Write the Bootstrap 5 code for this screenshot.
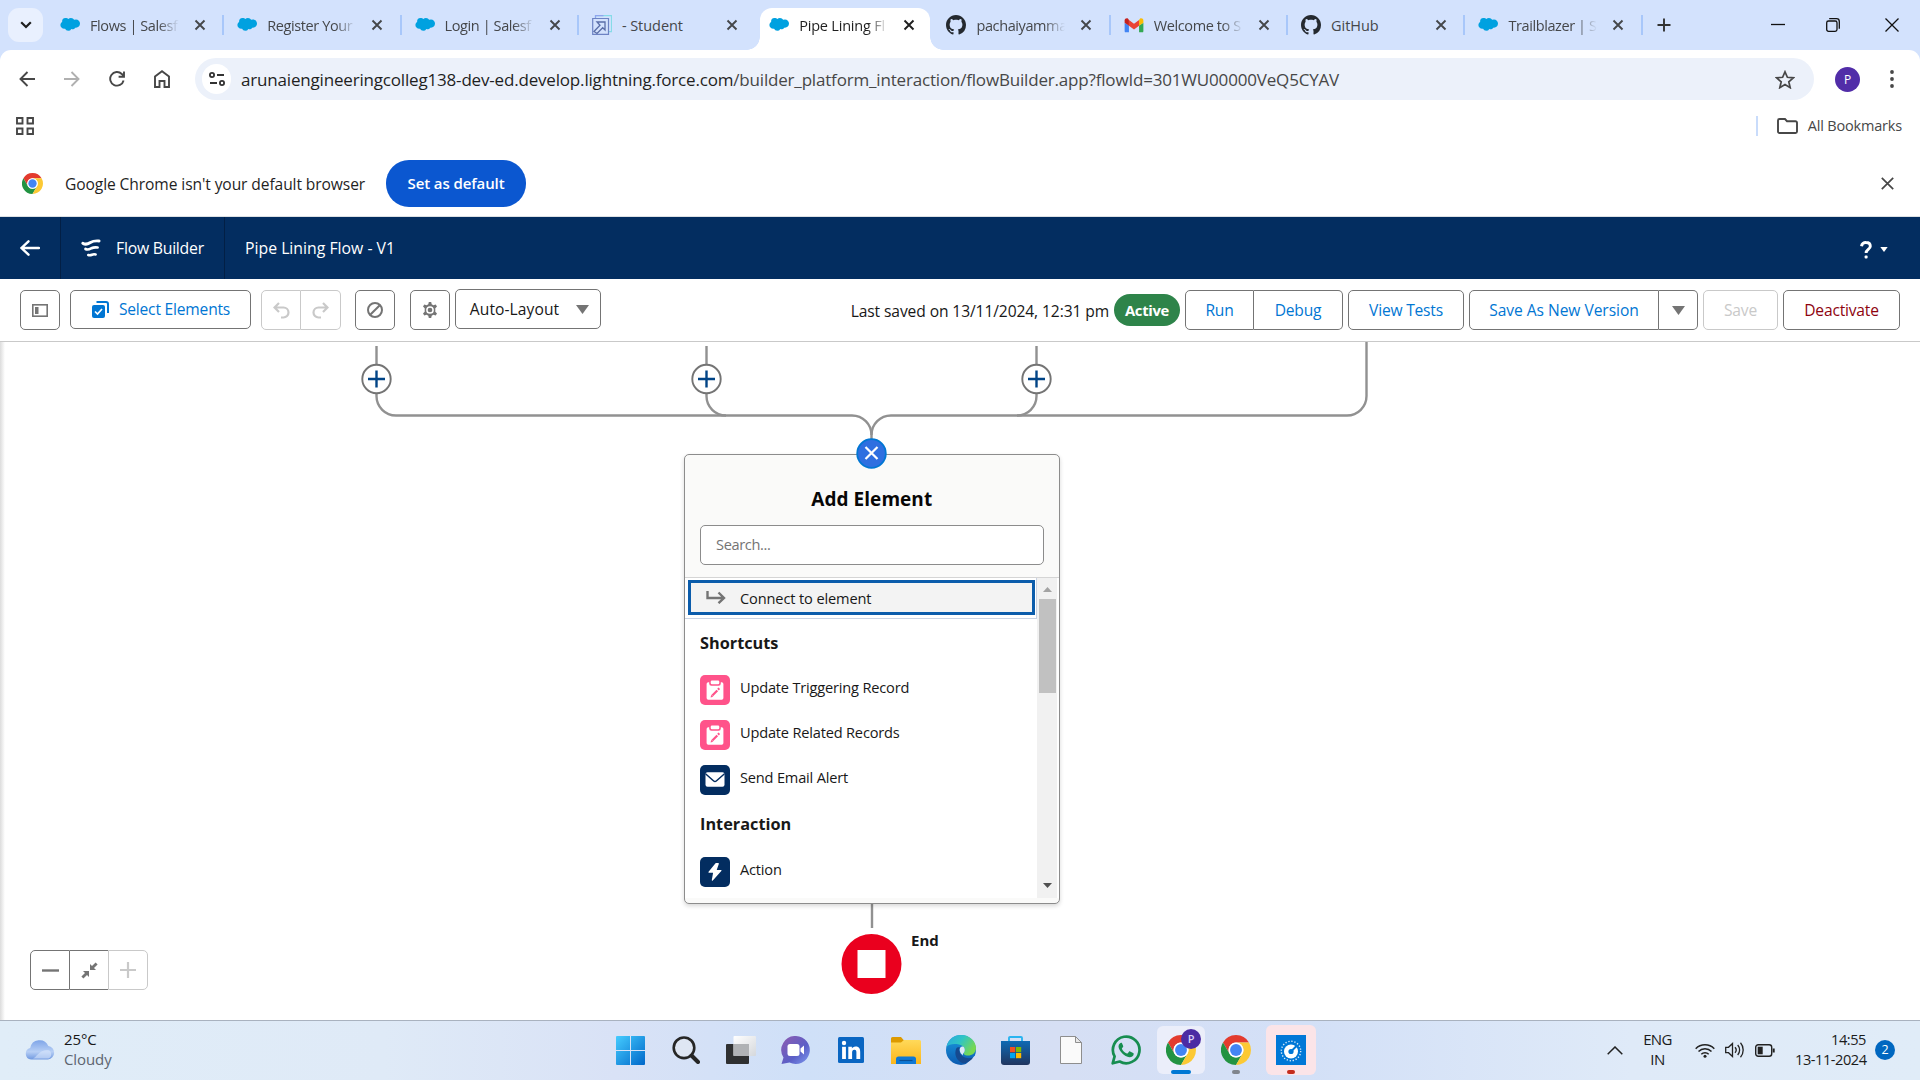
<!DOCTYPE html>
<html lang="en">
<head>
<meta charset="utf-8">
<title>Pipe Lining Flow - V1</title>
<meta name="viewport" content="width=device-width, initial-scale=1">
<link href="https://cdn.jsdelivr.net/npm/bootstrap@5.3.0/dist/css/bootstrap.min.css" rel="stylesheet">
<style>
  body { font-family: "Open Sans", "Noto Sans", sans-serif; font-size: 15.6px; letter-spacing: -.25px; line-height: 1.25; width: 1920px; height: 1080px; overflow: hidden; color: #181818; background: #fff; }
  svg { display: block; flex: none; }
  .tx { white-space: nowrap; }
  /* tab strip */
  .tabstrip { height: 50px; background: #d3e2fd; }
  .tab-search { width: 35px; height: 34px; margin: 8px 4px 8px 8px; border-radius: 11px; background: #e9f0fe; }
  .btab { width: 177.3px; height: 50px; padding-left: 13px; color: #45474a; font-size: 14.5px; letter-spacing: -.4px; position: relative; }
  .btab .ttl { width: 90px; margin-left: 10px; padding-top: 2px; overflow: hidden; -webkit-mask-image: linear-gradient(90deg,#000 76%,transparent 99%); }
  .btab .ttl.full { -webkit-mask-image: none; letter-spacing: -.05px; }
  .btab .cls { margin-left: 14px; }
  .btab.sep { border-right: 2px solid #a8c7fa; border-image: linear-gradient(transparent 15px,#a8c7fa 15px,#a8c7fa 35px,transparent 35px) 1; }
  .btab.sel { color: #1f1f1f; }
  .btab.sel > * { position: relative; }
  .btab.sel::before { content: ""; position: absolute; left: 4px; right: 3px; top: 8px; bottom: 0; background: #fff; border-radius: 12px 12px 0 0; }
  .btab.sel::after { content: ""; position: absolute; left: -9px; right: -10px; bottom: 0; height: 13px; background: radial-gradient(circle at 0 0,transparent 12.5px,#fff 13px) 0 0/13px 13px no-repeat, radial-gradient(circle at 100% 0,transparent 12.5px,#fff 13px) 100% 0/13px 13px no-repeat; }
  .winctl { width: 57px; }
  /* address row */
  .corner { background: #d3e2fd; }
  .addr { height: 58px; background: #fff; border-radius: 11px 11px 0 0; padding: 8px 0 8px 4px; }
  .navico { width: 45px; }
  .pill { width: 1619px; height: 42px; border-radius: 21px; background: #ecf1fa; padding-left: 7px; margin-left: 11px; font-size: 17px; letter-spacing: -.18px; color: #474747; }
  .pill .info { width: 29px; height: 30px; border-radius: 15px; background: #fff; margin-right: 10px; }
  .pill .tx { padding-top: 1px; }
  .pill b { font-weight: 400; color: #1f1f1f; }
  .ava { width: 25px; height: 25px; border-radius: 50%; background: #512da8; color: #fff; font-size: 12px; }
  .bmk { height: 42px; font-size: 14.5px; color: #474747; padding-bottom: 7px; }
  .infobar { height: 67px; padding-left: 22px; border-bottom: 1px solid #dde1e4; color: #1f1f1f; }
  .infomsg { margin-left: 22px; width: 321px; padding-top: 3px; letter-spacing: -.1px; }
  .setdef { width: 140px; height: 47px; border-radius: 23px; background: #0b57d0; color: #fff; font-weight: 600; font-size: 15px; letter-spacing: -.1px; }
  /* app header */
  .apphead { height: 62px; background: #032d60; color: #fff; font-size: 15.8px; }
  .apphead > .hcell { height: 62px; border-right: 1px solid #021f45; }
  .apphead .tx { padding-top: 2px; }
  /* builder toolbar */
  .tools { height: 63px; border-bottom: 1px solid #c9c9c9; padding: 0 20px; }
  .sbtn { height: 40px; border: 1px solid #747474; border-radius: 5px; background: #fff; color: #0176d3; padding: 0; display: flex; align-items: center; justify-content: center; white-space: nowrap; font-size: 15.6px; letter-spacing: -.2px; line-height: 1; }
  .sbtn .tx { padding-top: 2px; }
  .sbtn.off { border-color: #c9c9c9; color: #c9c9c9; }
  .sbtn.jl { border-top-right-radius: 0; border-bottom-right-radius: 0; }
  .sbtn.jr { border-top-left-radius: 0; border-bottom-left-radius: 0; border-left: 0; }
  .ico { width: 40px; color: #747474; }
  .active-pill { width: 66px; height: 32px; border-radius: 16px; background: #2e844a; color: #fff; font-weight: 700; font-size: 14.8px; letter-spacing: -.3px; }
  /* canvas */
  .flowcv { position: relative; height: 678px; overflow: hidden; background: linear-gradient(90deg,#dcdcdc,#fff 5px); }
  .flowcv > .wires { position: absolute; left: 0; top: 0; }
  .addcard { position: absolute; left: 684px; top: 112px; width: 375.500px; height: 450px; border: 1.5px solid #8c8c8c; border-radius: 5px; background: #fafaf9; box-shadow: 0 2px 4px rgba(0,0,0,.16); overflow: hidden; }
  .addcard h2 { font-size: 19px; font-weight: 700; letter-spacing: .05px; color: #080707; text-align: center; margin: 0; padding-top: 32px; height: 70px; line-height: 24px; }
  .srch { width: 344px; height: 40px; margin-left: 15px; border: 1px solid #8c8c8c; border-radius: 5px; background: #fff; color: #747474; font-size: 14.6px; letter-spacing: -.35px; padding: 0 0 2px 15px; }
  .lst { height: 321px; margin-top: 12px; border-top: 1px solid #d5d5d5; background: #fff; }
  .lst .items { width: 352px; }
  .conn { height: 41px; border: 1px solid #c9d3e4; border-left: 0; border-top: 0; padding: 2px 1px 3px 3px; font-size: 14.6px; letter-spacing: -.13px; }
  .conn > div { height: 35px; border: 3px solid #0b5cab; background: #f3f3f3; padding-left: 15px; }
  .grp { font-weight: 700; font-size: 16.3px; letter-spacing: 0; height: 48px; padding-left: 15px; display: flex; align-items: center; }
  .itm { height: 45px; padding-left: 15px; gap: 10px; display: flex; align-items: center; font-size: 14.6px; letter-spacing: -.19px; }
  .itm .tx { margin-top: -4px; }
  .sq { width: 30px; height: 30px; border-radius: 5px; display: flex; align-items: center; justify-content: center; flex: none; }
  .pink { background: #ff538a; } .navy { background: #032d60; }
  .sbar { width: 20px; height: 320px; background: #f1f1f1; }
  .sbar .thumb { width: 17px; height: 94px; background: #c1c1c1; }
  .endlbl { position: absolute; left: 911px; top: 589px; font-weight: 700; font-size: 15px; letter-spacing: 0; }
  .zoomer { position: absolute; left: 30px; top: 608px; }
  /* taskbar */
  .tbar { height: 60px; border-top: 1px solid #a9b2bf; padding-bottom: 1px; background: linear-gradient(90deg,#e0edf8 0,#dfeaf7 20%,#d9e2f6 32%,#cfe0f8 42%,#d6dff4 55%,#d3e0f7 68%,#dfeaf8 85%,#e0ecf8 100%); letter-spacing: -.1px; font-size: 15px; }
  .wx { width: 603px; padding-left: 25px; }
  .wxt { margin-left: 9px; line-height: 20px; padding-bottom: 3px; }
  .slot { width: 55px; height: 58px; position: relative; flex: none; }
  .slot .bg { position: absolute; inset: 5px 3px 5px 3.5px; border-radius: 6px; background: #ebeefa; }
  .slot svg { position: relative; }
  .run { position: absolute; bottom: 5px; left: 50%; transform: translateX(-50%); height: 4px; border-radius: 2px; }
  .pb { position: absolute; left: 28px; top: 8px; width: 20px; height: 20px; border-radius: 50%; background: #4b2ba3; color: #d9cff5; font-size: 11px; font-weight: 600; }
  .tray { margin-right: 25px; line-height: 20px; color: #1b1b1b; }
  .tray .lines { padding-bottom: 3px; }
  .dt { width: 71px; margin-left: 20px; font-size: 14.6px; letter-spacing: -.45px; }
  .cnt { width: 20px; height: 20px; border-radius: 50%; background: #0067c0; color: #fff; font-size: 12.5px; }
</style>
</head>
<body>
<svg width="0" height="0" class="position-absolute">
  <defs>
    <symbol id="sf" viewBox="0 0 20 16"><path fill="#00a1e0" d="M8.3 2.1A3.6 3.6 0 0 1 11 .9c1.400 0 2.600.8 3.200 1.900a4.500 4.500 0 0 1 1.800-.4c2.200 0 4 1.900 4 4.200s-1.800 4.200-4 4.200c-.3 0-.5 0-.8-.1a2.900 2.900 0 0 1-3.900 1.200 3.400 3.400 0 0 1-6.200-.2 3.100 3.100 0 0 1-.7.100C2 11.800.400 10.100.400 8.100c0-1.300.7-2.500 1.700-3.100A3.700 3.700 0 0 1 5.500 1.100c1.200 0 2.200.4 2.800 1z"/></symbol>
    <symbol id="gh" viewBox="0 0 16 16"><path fill="#24292f" d="M8 0C3.580 0 0 3.580 0 8c0 3.540 2.290 6.530 5.470 7.590.4.070.55-.17.55-.38 0-.19-.010-.82-.010-1.490-2.010.37-2.530-.49-2.690-.94-.090-.23-.48-.94-.82-1.130-.28-.15-.68-.52-.010-.53.63-.010 1.080.58 1.230.82.72 1.210 1.870.87 2.330.66.070-.52.28-.87.51-1.070-1.780-.2-3.640-.89-3.640-3.950 0-.87.31-1.590.82-2.150-.080-.2-.36-1.020.080-2.120 0 0 .67-.21 2.200.82.64-.18 1.320-.27 2-.27s1.360.090 2 .27c1.530-1.040 2.200-.82 2.200-.82.44 1.100.16 1.920.080 2.120.51.56.82 1.270.82 2.150 0 3.070-1.870 3.750-3.650 3.950.29.25.54.73.54 1.480 0 1.070-.010 1.930-.010 2.200 0 .21.15.46.55.38A8.010 8.010 0 0 0 16 8c0-4.420-3.580-8-8-8z"/></symbol>
    <symbol id="x" viewBox="0 0 12 12"><path d="M1.500 1.500l9 9M10.500 1.500l-9 9" stroke="currentColor" stroke-width="1.900" fill="none"/></symbol>
    <symbol id="chrome" viewBox="0 0 48 48"><path fill="#e33b2e" d="M24 12h20.780A24 24 0 0 0 3.210 12l10.400 18A12 12 0 0 1 24 12z"/><path fill="#229342" d="M34.400 30 24 48A24 24 0 0 1 3.210 12l10.400 18A12 12 0 0 0 34.400 30z"/><path fill="#fcc934" d="M24 12h20.780A24 24 0 0 1 24 48l10.400-18A12 12 0 0 0 24 12z"/><circle cx="24" cy="24" r="12" fill="#fff"/><circle cx="24" cy="24" r="9.500" fill="#4285f4"/></symbol>
    <symbol id="upd" viewBox="0 0 20 20"><path fill="#fff" d="M3.300 2.300h.9v1.300a2.200 2.200 0 0 0 2.200 2.200h7.200a2.200 2.200 0 0 0 2.200-2.200V2.300h.9a1.700 1.700 0 0 1 1.700 1.700V18a1.700 1.700 0 0 1-1.700 1.700H3.300A1.700 1.700 0 0 1 1.600 18V4a1.700 1.700 0 0 1 1.700-1.700z"/><path fill="#fff" d="M7 .4h6a1.300 1.300 0 0 1 1.300 1.300v1.300A1.300 1.300 0 0 1 13 4.300H7A1.300 1.300 0 0 1 5.700 3V1.700A1.300 1.300 0 0 1 7 .4z"/><path stroke="#ff538a" stroke-width="2.200" d="M7.300 15.600l5-5.200M13 9.600l1.300-1.300"/><path fill="#ff538a" d="M5.600 17.400l.6-2.600 2 2z"/></symbol>
    <symbol id="gm" viewBox="0 0 20 16"><path fill="#4285f4" d="M0 5v9a1.300 1.300 0 0 0 1.300 1.300H4.600V8z"/><path fill="#34a853" d="M20 5v9a1.300 1.300 0 0 1-1.300 1.300h-3.300V8z"/><path fill="#fbbc04" d="M15.400 2v6.300L20 5V2.600c0-2-2.300-2.900-3.700-1.900z"/><path fill="#ea4335" d="M4.600 8.300V2L10 6l5.400-4v6.300L10 12.300z"/><path fill="#c5221f" d="M0 2.600V5l4.600 3.300V2L3.700.7C2.300-.3 0 .6 0 2.600z"/></symbol>
    <linearGradient id="gw" gradientUnits="userSpaceOnUse" x1="0" y1="0" x2="29" y2="29"><stop offset="0" stop-color="#45ccff"/><stop offset="1" stop-color="#0067c9"/></linearGradient>
    <linearGradient id="gf" x1="0" y1="0" x2="0" y2="1"><stop offset="0" stop-color="#ffd95a"/><stop offset="1" stop-color="#fbb61b"/></linearGradient>
    <linearGradient id="gc" x1="0" y1="0" x2="1" y2="1"><stop offset="0" stop-color="#8f5bb0"/><stop offset=".6" stop-color="#5b5fc7"/><stop offset="1" stop-color="#7f9bf0"/></linearGradient>
    <linearGradient id="ge" x1="0" y1="0" x2="1" y2=".5"><stop offset="0" stop-color="#2aa5e0"/><stop offset=".5" stop-color="#2fc5c5"/><stop offset="1" stop-color="#78d850"/></linearGradient>
    <linearGradient id="ge2" x1="0" y1="0" x2="0" y2="1"><stop offset="0" stop-color="#1a9be0"/><stop offset="1" stop-color="#0b5ab0"/></linearGradient>
    <linearGradient id="gs" x1="0" y1="0" x2="0" y2="1"><stop offset="0" stop-color="#0f6ab4"/><stop offset="1" stop-color="#20355f"/></linearGradient>
    <linearGradient id="gt" x1="0" y1="0" x2="1" y2="1"><stop offset="0" stop-color="#fff"/><stop offset="1" stop-color="#d5d8dc"/></linearGradient>
    <linearGradient id="gcl" x1="0" y1="0" x2="0" y2="1"><stop offset="0" stop-color="#7fa5e8"/><stop offset=".6" stop-color="#b7cff5"/><stop offset="1" stop-color="#6f98e0"/></linearGradient>
  </defs>
</svg>

<header>
  <div class="tabstrip d-flex align-items-center">
    <div class="tab-search d-flex align-items-center justify-content-center"><svg width="12" height="8" viewBox="0 0 12 8"><path d="M1.200 1.200 6 6l4.800-4.800" fill="none" stroke="#1f1f1f" stroke-width="2.200"/></svg></div>
    <div class="btab sep d-flex align-items-center"><svg width="20" height="16"><use href="#sf"/></svg><div class="ttl"><span class="tx">Flows | Salesf</span></div><svg class="cls" width="12" height="12"><use href="#x"/></svg></div>
    <div class="btab sep d-flex align-items-center"><svg width="20" height="16"><use href="#sf"/></svg><div class="ttl"><span class="tx">Register Your</span></div><svg class="cls" width="12" height="12"><use href="#x"/></svg></div>
    <div class="btab sep d-flex align-items-center"><svg width="20" height="16"><use href="#sf"/></svg><div class="ttl"><span class="tx">Login | Salesf</span></div><svg class="cls" width="12" height="12"><use href="#x"/></svg></div>
    <div class="btab d-flex align-items-center"><svg width="20" height="20" viewBox="0 0 20 20" fill="none"><path d="M3.500 3V.7h16v16h-3" stroke="#86dbe8" stroke-width="1.200"/><path d="M3.500 3V.7h8" stroke="#8fa5ee" stroke-width="1.200"/><path d="M.7 19.300V3.500h15.800v15.800z" stroke="#6d83c4" stroke-width="1.200"/><path d="M5 7h8v8l-2.300-2.300L5 18.500l-3-2 6-6.200z" stroke="#5a6ea8" stroke-width="1.300"/></svg><div class="ttl full"><span class="tx">- Student</span></div><svg class="cls" width="12" height="12"><use href="#x"/></svg></div>
    <div class="btab sel d-flex align-items-center"><svg width="20" height="16"><use href="#sf"/></svg><div class="ttl" style="letter-spacing:-.2px"><span class="tx">Pipe Lining Fl</span></div><svg class="cls" width="12" height="12"><use href="#x"/></svg></div>
    <div class="btab sep d-flex align-items-center"><svg width="20" height="20"><use href="#gh"/></svg><div class="ttl"><span class="tx">pachaiyamma</span></div><svg class="cls" width="12" height="12"><use href="#x"/></svg></div>
    <div class="btab sep d-flex align-items-center"><svg width="20" height="15"><use href="#gm"/></svg><div class="ttl"><span class="tx">Welcome to S</span></div><svg class="cls" width="12" height="12"><use href="#x"/></svg></div>
    <div class="btab sep d-flex align-items-center"><svg width="20" height="20"><use href="#gh"/></svg><div class="ttl full"><span class="tx">GitHub</span></div><svg class="cls" width="12" height="12"><use href="#x"/></svg></div>
    <div class="btab sep d-flex align-items-center"><svg width="20" height="16"><use href="#sf"/></svg><div class="ttl"><span class="tx">Trailblazer | Sa</span></div><svg class="cls" width="12" height="12"><use href="#x"/></svg></div>
    <svg style="margin-left:14px" width="14" height="14" viewBox="0 0 14 14"><path d="M7 .5v13M.5 7h13" stroke="#333" stroke-width="1.900"/></svg>
    <div class="d-flex ms-auto">
      <div class="winctl d-flex justify-content-center"><svg width="14" height="14"><path d="M0 6.500h14" stroke="#111" stroke-width="1.300"/></svg></div>
      <div class="winctl d-flex justify-content-center pe-1"><svg width="14" height="14" fill="none" stroke="#111" stroke-width="1.300"><rect x=".7" y="3" width="10.300" height="10.300" rx="1.800"/><path d="M3.200.7h7.300a2.800 2.800 0 0 1 2.800 2.800v7.300"/></svg></div>
      <div class="winctl d-flex justify-content-center"><svg width="14" height="14"><path d="M.5.5l13 13M13.500.5l-13 13" stroke="#111" stroke-width="1.300"/></svg></div>
    </div>
  </div>
  <div class="corner">
  <div class="addr d-flex align-items-center">
    <div class="navico d-flex justify-content-center"><svg width="16" height="16" fill="none" stroke="#474747" stroke-width="1.900"><path d="M16 8H1.500M8.500 1 1.500 8l7 7"/></svg></div>
    <div class="navico d-flex justify-content-center"><svg width="16" height="16" fill="none" stroke="#b0b0b0" stroke-width="1.900"><path d="M0 8h14.500M7.500 1l7 7-7 7"/></svg></div>
    <div class="navico d-flex justify-content-center"><svg width="16" height="16" fill="none" stroke="#474747" stroke-width="1.900"><path d="M14.600 9.500A6.800 6.800 0 1 1 12.800 3L15 5.200M15 .5v5.200H9.600"/></svg></div>
    <div class="navico d-flex justify-content-center"><svg width="16" height="18" fill="none" stroke="#474747" stroke-width="1.900"><path d="M1 17V6.500L8 1.200l7 5.300V17h-4.500v-6h-5v6z"/></svg></div>
    <div class="pill d-flex align-items-center">
      <div class="info d-flex align-items-center justify-content-center"><svg width="16" height="16" fill="none" stroke="#333" stroke-width="1.800"><circle cx="3" cy="4" r="2.100"/><path d="M8 4h7M1 12h7"/><circle cx="13" cy="12" r="2.100"/></svg></div>
      <span class="tx"><b>arunaiengineeringcolleg138-dev-ed.develop.lightning.force.com</b>/builder_platform_interaction/flowBuilder.app?flowId=301WU00000VeQ5CYAV</span>
      <svg class="ms-auto" style="margin-right:19px" width="20" height="19" viewBox="0 0 20 19" fill="none" stroke="#474747" stroke-width="1.700"><path d="M10 1.800l2.400 5.500 6 .5-4.600 4 1.400 5.900L10 14.600l-5.200 3.100 1.400-5.900-4.600-4 6-.5z" stroke-linejoin="miter"/></svg>
    </div>
    <div class="ava d-flex align-items-center justify-content-center" style="margin-left:21px">P</div>
    <svg style="margin-left:30px" width="4" height="18" fill="#474747"><circle cx="2" cy="2" r="1.900"/><circle cx="2" cy="9" r="1.900"/><circle cx="2" cy="16" r="1.900"/></svg>
  </div>
  </div>
  <div class="bmk d-flex align-items-center">
    <svg class="ms-3" width="18" height="18" fill="none" stroke="#474747" stroke-width="1.900"><path d="M1 1h5.500v5.500H1zM11.500 1H17v5.500h-5.500zM1 11.500h5.500V17H1zM11.500 11.500H17V17h-5.500z"/></svg>
    <div class="d-flex align-items-center ms-auto" style="margin-right:18px">
      <div style="width:2px;height:20px;background:#c9dcfb"></div>
      <svg style="margin-left:19px" width="21" height="16" fill="none" stroke="#474747" stroke-width="1.900"><path d="M1 13.500v-11A1.500 1.500 0 0 1 2.500 1H8l2 2.200h8.500A1.500 1.500 0 0 1 20 4.700v8.800a1.500 1.500 0 0 1-1.500 1.500h-16A1.500 1.500 0 0 1 1 13.500z"/></svg>
      <span class="tx" style="margin-left:10px;padding-top:1px;letter-spacing:-.18px">All Bookmarks</span>
    </div>
  </div>
  <div class="infobar d-flex align-items-center">
    <svg width="21" height="21"><use href="#chrome"/></svg>
    <span class="tx infomsg">Google Chrome isn't your default browser</span>
    <button class="btn setdef p-0"><span class="tx">Set as default</span></button>
    <svg class="ms-auto" style="margin-right:26px" width="13" height="13" viewBox="0 0 13 13"><path d="M.8.8l11.400 11.400M12.200.8.8 12.200" stroke="#474747" stroke-width="1.700"/></svg>
  </div>
</header>

<nav class="apphead d-flex align-items-center">
  <div class="hcell d-flex align-items-center" style="width:61px;padding-left:20px"><svg width="20" height="16" fill="none" stroke="#fff" stroke-width="2.400" stroke-linecap="round"><path d="M19 8H2M8.500 1.300 1.500 8l7 6.700"/></svg></div>
  <div class="hcell d-flex align-items-center" style="width:164px;padding-left:20px">
    <svg width="20" height="19" viewBox="0 0 20 19" fill="none" stroke="#fff" stroke-linecap="round"><path stroke-width="2.900" d="M1.800 4.200c3 2 5 .8 7.600-.8 2.600-1.500 5-1.700 8.700-1.400"/><path stroke-width="2.700" d="M4.500 10c2.300 1.300 4 .3 5.900-.7 2-1 3.700-1.200 6.200-.8"/><path stroke-width="2.600" d="M7.300 16c1.500.6 2.500.2 3.700-.3 1.200-.5 2.200-.6 3.600-.2"/></svg>
    <span class="tx" style="margin-left:15px">Flow Builder</span>
  </div>
  <span class="tx" style="margin-left:20px;letter-spacing:0">Pipe Lining Flow - V1</span>
  <div class="d-flex align-items-center ms-auto pt-1" style="margin-right:32px">
    <svg width="12" height="18" viewBox="0 0 12 18"><path d="M1.500 5.200A4.300 4.300 0 0 1 6 1.500c2.600 0 4.300 1.500 4.300 3.700 0 3.300-4.200 3.200-4.200 6.800" fill="none" stroke="#fff" stroke-width="2.900"/><rect x="4.600" y="14.500" width="3" height="3" rx="1" fill="#fff"/></svg>
    <svg style="margin-left:8px" width="8" height="6"><path d="M.3 0h7.400L4 5z" fill="#fff"/></svg>
  </div>
</nav>

<section class="tools d-flex align-items-center">
  <button class="sbtn ico"><svg width="16" height="13" fill="none" stroke="#747474" stroke-width="1.600"><rect x=".8" y=".8" width="14.400" height="11.400"/><rect x="3" y="3" width="3.500" height="7" fill="#747474" stroke="none"/></svg></button>
  <button class="sbtn" style="width:181px;margin-left:10px;height:39px;margin-bottom:2px"><svg width="18" height="17" viewBox="0 0 18 17"><path d="M5.500 1H15a2 2 0 0 1 2 2v9" fill="none" stroke="#0176d3" stroke-width="2"/><rect x="1" y="4" width="13" height="13" rx="2" fill="#0176d3"/><path d="M4 10.500l2.500 2.500 4.500-5" fill="none" stroke="#fff" stroke-width="1.700"/></svg><span class="tx" style="margin-left:10px">Select Elements</span></button>
  <div class="d-flex" style="margin-left:10px"><button class="sbtn off ico jl"><svg width="17" height="17" fill="none" stroke="#c9c9c9" stroke-width="2.200"><path d="M6 1 1.500 5.500 6 10M2 5.500h8.500a5 5 0 0 1 0 10H8"/></svg></button><button class="sbtn off ico jr"><svg width="17" height="17" fill="none" stroke="#c9c9c9" stroke-width="2.200"><path d="M11 1l4.500 4.500L11 10M15 5.500H6.500a5 5 0 0 0 0 10H9"/></svg></button></div>
  <button class="sbtn ico" style="margin-left:14px"><svg width="16" height="16" fill="none" stroke="#747474" stroke-width="2"><circle cx="8" cy="8" r="7"/><path d="M3.200 12.800l9.600-9.600"/></svg></button>
  <button class="sbtn ico" style="margin-left:15px"><svg width="16" height="16" viewBox="0 0 16 16"><path d="M6.800 0h2.400l.5 2.300 1.700.9 2.300-.8 1.300 2.200L13.300 6.200v3.600l1.700 1.600-1.300 2.200-2.300-.8-1.700.9L9.200 16H6.800l-.5-2.300-1.700-.9-2.300.8L1 11.400l1.700-1.600V6.200L1 4.600l1.300-2.200 2.300.8 1.700-.9z" fill="#747474"/><circle cx="8" cy="8" r="3.100" fill="#747474" stroke="#fff" stroke-width="1.500"/></svg></button>
  <button class="sbtn" style="width:146px;margin-left:5px;padding-left:3px;color:#181818;margin-bottom:2px;letter-spacing:.08px"><span class="tx">Auto-Layout</span><svg style="margin-left:17px" width="13" height="9"><path d="M0 0h13L6.500 9z" fill="#747474"/></svg></button>
  <div class="d-flex align-items-center ms-auto" style="gap:5px">
    <span class="tx" style="padding-top:3px;letter-spacing:-.1px">Last saved on 13/11/2024, 12:31 pm</span>
    <span class="active-pill d-flex align-items-center justify-content-center"><span class="tx">Active</span></span>
    <div class="d-flex"><button class="sbtn jl" style="width:69px"><span class="tx">Run</span></button><button class="sbtn jr" style="width:89px"><span class="tx">Debug</span></button></div>
    <button class="sbtn" style="width:116px"><span class="tx">View Tests</span></button>
    <div class="d-flex"><button class="sbtn jl" style="width:190px;letter-spacing:-.05px"><span class="tx">Save As New Version</span></button><button class="sbtn jr" style="width:39px"><svg width="13" height="9"><path d="M0 0h13L6.500 9z" fill="#747474"/></svg></button></div>
    <button class="sbtn off" style="width:75px"><span class="tx">Save</span></button>
    <button class="sbtn" style="width:117px;color:#8e030f"><span class="tx">Deactivate</span></button>
  </div>
</section>

<main class="flowcv">
  <svg class="wires" width="1920" height="678" fill="none" stroke="#919191" stroke-width="2.400">
    <path d="M376.500 4v50a19.500 19.500 0 0 0 19.500 19.500H852a19.500 19.500 0 0 1 19.500 19.500v10"/>
    <path d="M706.500 4v50a19.500 19.500 0 0 0 19.500 19.500"/>
    <path d="M1036.500 4v50a19.500 19.500 0 0 1-19.500 19.500"/>
    <path d="M1366.500 0v54a19.500 19.500 0 0 1-19.500 19.500H891a19.500 19.500 0 0 0-19.500 19.500"/>
    <path d="M872 560v26"/>
    <g fill="#fff" stroke="#747474" stroke-width="1.900"><circle cx="376.500" cy="37" r="14.200"/><circle cx="706.500" cy="37" r="14.200"/><circle cx="1036.500" cy="37" r="14.200"/></g>
    <path stroke="#014486" stroke-width="2.400" d="M368 37h17M376.500 28.500v17M698 37h17M706.500 28.500v17M1028 37h17M1036.500 28.500v17"/>
    <circle cx="871.500" cy="622" r="30" fill="#ea001e" stroke="none"/><rect x="857.500" y="608" width="28" height="28" fill="#fff" stroke="none"/>
  </svg>
  <div class="addcard">
    <h2><span class="tx">Add Element</span></h2>
    <div class="srch d-flex align-items-center"><span class="tx">Search...</span></div>
    <div class="lst d-flex">
      <div class="items">
        <div class="conn"><div class="d-flex align-items-center"><svg width="20" height="13" viewBox="0 0 20 13" fill="none" stroke="#747474" stroke-width="2.400"><path d="M1.500 0v7H18M12.500 1.500 18 7l-5.500 5.200"/></svg><span class="tx" style="margin-left:14px;padding-top:2px">Connect to element</span></div></div>
        <div class="grp"><span class="tx">Shortcuts</span></div>
        <div class="itm"><span class="sq pink"><svg width="20" height="20"><use href="#upd"/></svg></span><span class="tx">Update Triggering Record</span></div>
        <div class="itm"><span class="sq pink"><svg width="20" height="20"><use href="#upd"/></svg></span><span class="tx">Update Related Records</span></div>
        <div class="itm"><span class="sq navy"><svg width="20" height="15" viewBox="0 0 20 15"><rect x=".5" y=".3" width="19" height="14.400" rx="2" fill="#fff"/><path d="M.5 1.800 8.700 9a2 2 0 0 0 2.600 0l8.200-7.200" fill="none" stroke="#032d60" stroke-width="1.500"/></svg></span><span class="tx">Send Email Alert</span></div>
        <div class="grp" style="height:47px;padding-bottom:3px"><span class="tx">Interaction</span></div>
        <div class="itm"><span class="sq navy"><svg width="14" height="18" viewBox="0 0 14 18"><path d="M7.500.3.600 8.800c-.3.500-.1 1 .5 1h4L3.800 17c-.1.700.6.900 1 .4l8.500-9.300c.4-.5.200-1.100-.5-1.100H8.700L10.800.9C11 .3 10.600 0 10 0H8.200z" fill="#fff"/></svg></span><span class="tx">Action</span></div>
      </div>
      <div class="sbar d-flex flex-column align-items-center">
        <svg style="margin-top:9px" width="9" height="5"><path d="M0 5 4.500 0 9 5z" fill="#a3a3a3"/></svg>
        <div class="thumb" style="margin-top:7px"></div>
        <svg style="margin-top:auto;margin-bottom:10px" width="9" height="5"><path d="M0 0h9L4.500 5z" fill="#505050"/></svg>
      </div>
    </div>
  </div>
  <svg class="position-absolute" style="left:856px;top:96px" width="31" height="31"><circle cx="15.500" cy="15.500" r="14.300" fill="#2f6fe0" stroke="#0176d3" stroke-width="1.800"/><path d="M9.500 9l12 12M21.500 9l-12 12" stroke="#fff" stroke-width="2.200"/></svg>
  <div class="endlbl tx">End</div>
  <div class="zoomer d-flex">
    <button class="sbtn ico jl"><svg width="17" height="3"><path d="M0 1.500h17" stroke="#747474" stroke-width="2.400"/></svg></button>
    <button class="sbtn ico jr" style="border-top-right-radius:0;border-bottom-right-radius:0;border-right:0;width:38px"><svg width="17" height="17" viewBox="0 0 17 17" fill="#747474"><path d="M9 8V2l2 2L14.600.400 16.600 2.400 13 6l2 2zM8 9v6l-2-2-3.600 3.600L.4 14.600 4 11 2 9z"/></svg></button>
    <button class="sbtn off ico jr" style="border-left:1px solid #c9c9c9"><svg width="16" height="16"><path d="M8 0v16M0 8h16" stroke="#c9c9c9" stroke-width="2.200"/></svg></button>
  </div>
</main>

<footer class="tbar d-flex align-items-center">
  <div class="wx d-flex align-items-center">
    <svg width="30" height="20" viewBox="0 0 30 20"><path d="M6 19.500a5.800 5.800 0 0 1-.8-11.400A9.500 9.500 0 0 1 23.300 6 6.800 6.800 0 0 1 23 19.500z" fill="url(#gcl)"/><path d="M8 18.500c4-1 5-8.500 15-8.500 4 1 4.500 7 .5 8.500z" fill="#d9e6fb" opacity=".6"/></svg>
    <div class="wxt"><div class="tx">25°C</div><div class="tx" style="color:#5d6570">Cloudy</div></div>
  </div>
  <div class="slot d-flex align-items-center justify-content-center"><svg width="29" height="29" fill="url(#gw)"><path d="M0 1a1 1 0 0 1 1-1h13v14H0zM15 0h13a1 1 0 0 1 1 1v13H15zM0 15h14v14H1a1 1 0 0 1-1-1zM15 15h14v13a1 1 0 0 1-1 1H15z"/></svg></div>
  <div class="slot d-flex align-items-center justify-content-center"><svg width="28" height="28" fill="none" stroke="#262626"><circle cx="12" cy="11.800" r="10.300" fill="#dfe6f3" stroke-width="2.600"/><path d="M19.500 19.500l6.500 6.500" stroke-width="4" stroke-linecap="round"/></svg></div>
  <div class="slot d-flex align-items-center justify-content-center"><svg width="30" height="28"><rect y="8" width="23" height="20" rx="1" fill="#2f3031"/><rect x="7.500" width="22.500" height="20" rx="1" fill="url(#gt)"/><path d="M7.500 8H23v12H7.500z" fill="#b0b2b5"/></svg></div>
  <div class="slot d-flex align-items-center justify-content-center"><svg width="29" height="28" viewBox="0 0 29 28"><path d="M15 0a14 14 0 1 1-6.500 26.500L.5 28l2-6.500A14 14 0 0 1 15 0z" fill="url(#gc)"/><rect x="6.500" y="8" width="12" height="12" rx="2.500" fill="#fff"/><path d="M19.500 12.500l3.500-3v9l-3.500-3z" fill="#fff"/></svg></div>
  <div class="slot d-flex align-items-center justify-content-center"><svg width="26" height="26"><rect width="26" height="26" rx="1.500" fill="#0a66c2"/><g fill="#fff"><circle cx="6" cy="6" r="2.200"/><rect x="4.100" y="9.800" width="3.800" height="12.200"/><path d="M10.300 9.800h3.600v1.700c.5-1 1.800-2 3.700-2 3.900 0 4.600 2.500 4.600 5.800V22h-3.800v-6c0-1.400 0-3.200-2-3.200s-2.300 1.500-2.300 3.100V22h-3.800z"/></g></svg></div>
  <div class="slot d-flex align-items-center justify-content-center"><svg width="30" height="27"><path d="M0 1.500A1.500 1.500 0 0 1 1.500 0H10l3 3.500h15V9H0z" fill="#dd9a00"/><path d="M0 5.500h10l3-2.500h15.500A1.500 1.500 0 0 1 30 4.500V27H0z" fill="url(#gf)"/><path d="M5 27v-5a2.500 2.500 0 0 1 2.500-2.500h15A2.500 2.500 0 0 1 25 22v5z" fill="#0f78d4"/><path d="M8.500 23.500h13" stroke="#0a4f94" stroke-width="1.200"/></svg></div>
  <div class="slot d-flex align-items-center justify-content-center"><svg width="30" height="30" viewBox="0 0 30 30"><circle cx="15" cy="15" r="15" fill="url(#ge2)"/><path d="M28 21.500c2-1 2-3 2-6v8l-6 6.500-4-1z" fill="#d4dff5"/><path d="M.5 12C2 4 8 0 15 0c9 0 15 6.500 15 13 0 5-4 7.500-8 7.500-3.500 0-5-1.500-4-3 2-3 0-7-5-8C8 8.500 3 9 .5 12z" fill="url(#ge)"/><path d="M10.500 13c-3 6 0 13.500 7 15.500 4-.8 8-3 9.800-6.300-3.300 1.600-7.300 1.300-10.300-.7-3-2.300-4.500-5.500-3-9-1.500-.5-3-.3-3.500.5z" fill="#164a8f"/><path d="M17.800 17.800c1.700-2 1.200-5-.8-6.300-2-.3-3.500 1.500-3.300 3.500.3 2.500 1.300 4 3.300 5.500-.3-1 0-1.800.8-2.700z" fill="#dce8f8"/></svg></div>
  <div class="slot d-flex align-items-center justify-content-center"><svg width="29" height="29"><path d="M8 6V2a1 1 0 0 1 1-1h11a1 1 0 0 1 1 1v4" fill="none" stroke="#2ab4f0" stroke-width="1.900"/><path d="M0 5h29v21a3 3 0 0 1-3 3H3a3 3 0 0 1-3-3z" fill="url(#gs)"/><path d="M9 11h5.200v5.200H9z" fill="#f25022"/><path d="M15 11h5.200v5.200H15z" fill="#7fba00"/><path d="M9 17h5.200v5.200H9z" fill="#00a4ef"/><path d="M15 17h5.200v5.200H15z" fill="#ffb900"/></svg></div>
  <div class="slot d-flex align-items-center justify-content-center"><svg width="22" height="28"><path d="M.5.5h15l6 6v21H.5z" fill="#fafafa" stroke="#8e8e8e"/><path d="M15.500.5v6h6z" fill="#e8e8e8" stroke="#8e8e8e"/></svg></div>
  <div class="slot d-flex align-items-center justify-content-center"><svg width="30" height="30" viewBox="0 0 30 30"><path d="M1.700 28.300l1.900-6.900A13.300 13.300 0 1 1 8.700 26.500z" fill="none" stroke="#178d50" stroke-width="2.700" stroke-linejoin="round"/><path d="M10.200 7.800c-.7 0-2.700 1.200-2.700 3.800 0 4 6 10.600 11 10.600 2.500 0 4.200-1.500 4.200-3.300 0-.6-.2-.8-.6-1l-3-1.500c-.5-.2-.8-.1-1.100.3l-1.200 1.500c-.3.300-.6.400-1 .2-2-.9-3.800-2.500-4.800-4.500-.2-.4-.1-.7.200-1l.8-1c.3-.3.300-.6.200-1l-1.200-2.700c-.2-.3-.4-.4-.8-.4z" fill="#178d50"/></svg></div>
  <div class="slot d-flex align-items-center justify-content-center"><div class="bg"></div><svg width="30" height="30"><use href="#chrome"/></svg><div class="pb d-flex align-items-center justify-content-center">P</div><div class="run" style="width:20px;background:#0078d4"></div></div>
  <div class="slot d-flex align-items-center justify-content-center"><svg width="30" height="30"><use href="#chrome"/></svg><div class="run" style="width:8px;background:#80858d"></div></div>
  <div class="slot d-flex align-items-center justify-content-center"><div class="bg" style="background:#fbe4e8;inset:4px 2.500px 4px 2.500px"></div><svg width="30" height="30"><rect width="30" height="30" fill="#0078d7"/><circle cx="15" cy="16" r="9.700" fill="none" stroke="#fff" stroke-width="1.400" stroke-dasharray="1.300 1.750" opacity=".85"/><circle cx="15" cy="16.500" r="7" fill="#fff"/><circle cx="15" cy="16.500" r="2.600" fill="#0078d7"/><path d="M15 16.500l5.500-5.500" stroke="#0078d7" stroke-width="2"/></svg><div class="run" style="width:8px;background:#c42b1c"></div></div>
  <div class="tray d-flex align-items-center ms-auto">
    <svg width="16" height="9"><path d="M.7 8.300 8 1l7.300 7.300" fill="none" stroke="#222" stroke-width="1.500"/></svg>
    <div class="lines text-center" style="margin-left:20px;width:29px;letter-spacing:-.6px"><div class="tx">ENG</div><div class="tx">IN</div></div>
    <svg style="margin-left:23px" width="20" height="15" fill="none" stroke="#222" stroke-width="1.500"><path d="M.7 5.700a13 13 0 0 1 18.600 0M3.500 8.500a9 9 0 0 1 13 0M6.300 11.200a5.200 5.200 0 0 1 7.400 0"/><circle cx="10" cy="13.200" r="1.500" fill="#222" stroke="none"/></svg>
    <svg style="margin-left:10px" width="20" height="16" fill="none" stroke="#222" stroke-width="1.300"><path d="M.7 5.300h2.800L7.500 1.500v13L3.500 10.700H.7zM10 5.300a4 4 0 0 1 0 5.400M12.700 3a7.500 7.500 0 0 1 0 10M15.500.8a11 11 0 0 1 0 14.400"/></svg>
    <svg style="margin-left:10px" width="20" height="13" fill="none" stroke="#222" stroke-width="1.400"><rect x=".7" y=".7" width="16" height="11.600" rx="2.500"/><rect x="2.700" y="2.700" width="5" height="7.600" fill="#222" stroke="none"/><path d="M18.700 4.500v4" stroke-width="2"/></svg>
    <div class="lines dt text-end"><div class="tx">14:55</div><div class="tx">13-11-2024</div></div>
    <div class="cnt d-flex align-items-center justify-content-center" style="margin-left:9px">2</div>
  </div>
</footer>
<script src="https://cdn.jsdelivr.net/npm/bootstrap@5.3.0/dist/js/bootstrap.bundle.min.js"></script>
</body>
</html>
